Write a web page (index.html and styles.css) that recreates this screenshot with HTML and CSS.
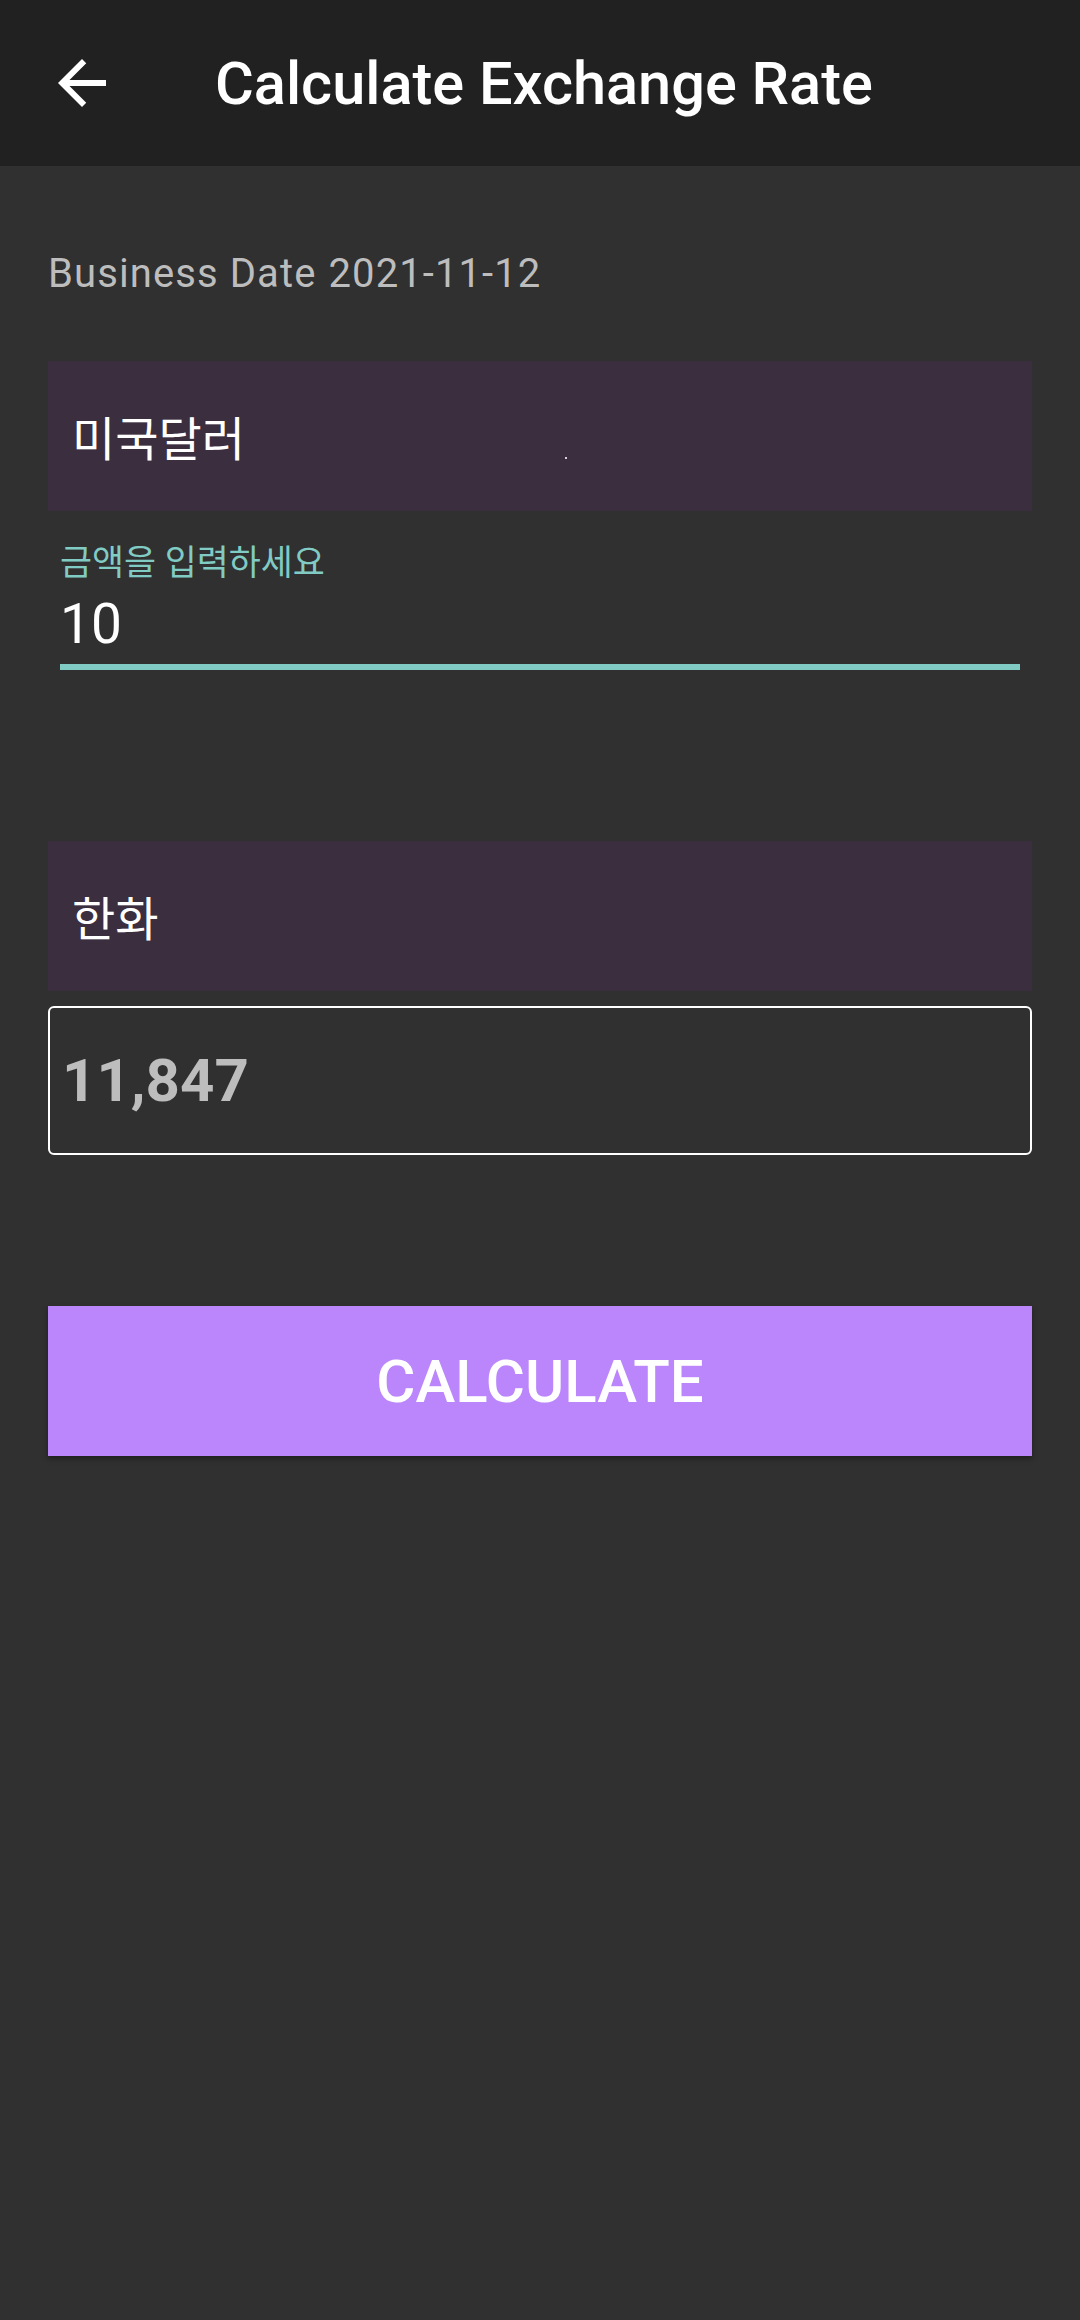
FILE: index.html
```html
<!DOCTYPE html>
<html lang="ko">
<head>
<meta charset="utf-8">
<title>Calculate Exchange Rate</title>
<link rel="stylesheet" href="styles.css">
</head>
<body>
<div class="app">
  <header class="toolbar">
    <div class="nav-btn">
      <svg class="nav-icon" viewBox="0 0 24 24" width="72" height="72"><path fill="#ffffff" d="M20 11H7.83l5.59-5.59L12 4l-8 8 8 8 1.41-1.41L7.83 13H20v-2z"/></svg>
    </div>
    <h1 class="title">Calculate Exchange Rate</h1>
  </header>
  <main class="content">
    <div class="date-row">
      <span class="date-label">Business Date</span>
      <span class="date-value">2021-11-12</span>
    </div>
    <div class="spinner spinner-from">
      <span class="spinner-text">미국달러</span>
      <span class="speck"></span>
    </div>
    <div class="field">
      <div class="field-label">금액을 입력하세요</div>
      <div class="field-input">10</div>
    </div>
    <div class="spinner spinner-to">
      <span class="spinner-text">한화</span>
    </div>
    <div class="result-box">
      <span class="result-text">11,847</span>
    </div>
    <button class="calc-btn">CALCULATE</button>
  </main>
</div>
</body>
</html>
```
FILE: styles.css
```css
html, body {
  margin: 0;
  padding: 0;
  background: #303030;
}
body {
  width: 1080px;
  height: 2320px;
  font-family: Roboto, "Noto Sans CJK KR", sans-serif;
  color: #ffffff;
}
.app {
  min-height: 2320px;
  background: #303030;
}
.toolbar {
  height: 166px;
  background: #212121;
  display: flex;
  align-items: center;
}
.nav-btn {
  width: 72px;
  height: 72px;
  margin-left: 46px;
  display: flex;
}
.nav-icon {
  display: block;
}
.title {
  margin: 2px 0 0 97px;
  font-size: 59.5px;
  font-weight: 500;
  color: #ffffff;
  line-height: 67px;
}
.content {
  padding: 0 48px;
  display: flex;
  flex-direction: column;
}
.date-row {
  margin-top: 85px;
  display: flex;
  gap: 12px;
  font-size: 40px;
  letter-spacing: 1.1px;
  line-height: 46px;
  color: #bdbdbd;
}
.spinner {
  position: relative;
  height: 150px;
  background: #3b2e3f;
  display: flex;
  align-items: center;
  padding-left: 24px;
}
.spinner-from {
  margin-top: 64px;
}
.spinner-to {
  margin-top: 171px;
}
.spinner-text {
  font-family: "Noto Sans CJK KR", sans-serif;
  font-size: 47px;
  line-height: 52px;
  color: #ffffff;
}
.speck {
  position: absolute;
  left: 517px;
  top: 96px;
  width: 2px;
  height: 2px;
  background: #d8d0da;
}
.field {
  margin: 32px 12px 0;
  border-bottom: 6px solid #80cbc4;
  padding-bottom: 8px;
}
.field-label {
  font-size: 34.8px;
  line-height: 40px;
  color: #80cbc4;
}
.field-input {
  margin-top: 9px;
  font-size: 55px;
  line-height: 64px;
  color: #ffffff;
}
.result-box {
  margin-top: 15px;
  height: 145px;
  border: 2px solid #ffffff;
  border-radius: 6px;
  display: flex;
  align-items: center;
  padding-left: 12px;
}
.result-text {
  font-size: 60px;
  font-weight: 700;
  line-height: 70px;
  color: #bdbdbd;
}
.calc-btn {
  margin-top: 151px;
  height: 150px;
  width: 100%;
  border: none;
  background: #bb86fc;
  color: #ffffff;
  font-family: Roboto, sans-serif;
  font-size: 60px;
  font-weight: 500;
  box-shadow: 0 3px 5px rgba(0, 0, 0, 0.35);
  padding: 0;
}
```
